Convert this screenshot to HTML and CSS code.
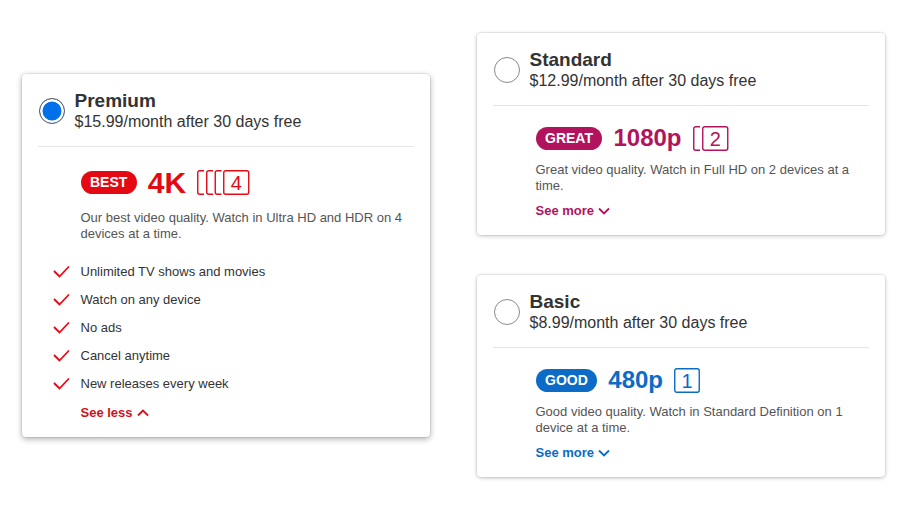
FILE: index.html
```html
<!DOCTYPE html>
<html lang="en">
<head>
<meta charset="utf-8">
<title>Plans</title>
<link rel="stylesheet" href="styles.css">
</head>
<body>
<main class="plans">
  <section class="card card--selected card--best">
    <header class="card-head">
      <span class="radio radio--on"></span>
      <div class="plan-info">
        <div class="plan-name">Premium</div>
        <div class="plan-price">$15.99/month after 30 days free</div>
      </div>
    </header>
    <div class="card-body">
      <div class="quality">
        <span class="badge">BEST</span>
        <span class="res res--big">4K</span>
        <svg class="screens" width="53" height="25" viewBox="0 0 53 25">
          <path d="M7 0.75 H2.75 A2 2 0 0 0 0.75 2.75 V22.25 A2 2 0 0 0 2.75 24.25 H7"/>
          <path d="M16 0.75 H11.75 A2 2 0 0 0 9.75 2.75 V22.25 A2 2 0 0 0 11.75 24.25 H16"/>
          <path d="M24.5 0.75 H20.25 A2 2 0 0 0 18.25 2.75 V22.25 A2 2 0 0 0 20.25 24.25 H24.5"/>
          <rect x="26.75" y="0.75" width="25" height="23.5" rx="2"/>
          <text x="39.25" y="19.5" text-anchor="middle">4</text>
        </svg>
      </div>
      <p class="desc">Our best video quality. Watch in Ultra HD and HDR on 4 devices at a time.</p>
      <ul class="features">
        <li><svg class="check" width="17" height="13" viewBox="0 0 17 13"><polyline points="1,6 6.5,11.5 16,1.5"/></svg>Unlimited TV shows and movies</li>
        <li><svg class="check" width="17" height="13" viewBox="0 0 17 13"><polyline points="1,6 6.5,11.5 16,1.5"/></svg>Watch on any device</li>
        <li><svg class="check" width="17" height="13" viewBox="0 0 17 13"><polyline points="1,6 6.5,11.5 16,1.5"/></svg>No ads</li>
        <li><svg class="check" width="17" height="13" viewBox="0 0 17 13"><polyline points="1,6 6.5,11.5 16,1.5"/></svg>Cancel anytime</li>
        <li><svg class="check" width="17" height="13" viewBox="0 0 17 13"><polyline points="1,6 6.5,11.5 16,1.5"/></svg>New releases every week</li>
      </ul>
      <a class="toggle" href="#">See less <svg class="chev" width="12" height="8" viewBox="0 0 12 8"><polyline points="1,6.5 6,1.5 11,6.5"/></svg></a>
    </div>
  </section>

  <div class="col">
    <section class="card card--great">
      <header class="card-head">
        <span class="radio"></span>
        <div class="plan-info">
          <div class="plan-name">Standard</div>
          <div class="plan-price">$12.99/month after 30 days free</div>
        </div>
      </header>
      <div class="card-body">
        <div class="quality">
          <span class="badge">GREAT</span>
          <span class="res">1080p</span>
          <svg class="screens" width="36" height="25" viewBox="0 0 36 25">
            <path d="M7 0.75 H2.75 A2 2 0 0 0 0.75 2.75 V22.25 A2 2 0 0 0 2.75 24.25 H7"/>
            <rect x="9.75" y="0.75" width="25" height="23.5" rx="2"/>
            <text x="22.25" y="19.5" text-anchor="middle">2</text>
          </svg>
        </div>
        <p class="desc">Great video quality. Watch in Full HD on 2 devices at a time.</p>
        <a class="toggle" href="#">See more <svg class="chev" width="12" height="8" viewBox="0 0 12 8"><polyline points="1,1.5 6,6.5 11,1.5"/></svg></a>
      </div>
    </section>

    <section class="card card--good">
      <header class="card-head">
        <span class="radio"></span>
        <div class="plan-info">
          <div class="plan-name">Basic</div>
          <div class="plan-price">$8.99/month after 30 days free</div>
        </div>
      </header>
      <div class="card-body">
        <div class="quality">
          <span class="badge">GOOD</span>
          <span class="res">480p</span>
          <svg class="screens" width="26" height="25" viewBox="0 0 26 25">
            <rect x="0.75" y="0.75" width="24.5" height="23.5" rx="2"/>
            <text x="13" y="19.5" text-anchor="middle">1</text>
          </svg>
        </div>
        <p class="desc">Good video quality. Watch in Standard Definition on 1 device at a time.</p>
        <a class="toggle" href="#">See more <svg class="chev" width="12" height="8" viewBox="0 0 12 8"><polyline points="1,1.5 6,6.5 11,1.5"/></svg></a>
      </div>
    </section>
  </div>
</main>
</body>
</html>
```

FILE: styles.css
```css
* { box-sizing: border-box; }

html, body {
  margin: 0;
  padding: 0;
  background: #fff;
}

body {
  font-family: "Liberation Sans", Arial, sans-serif;
  color: #333;
}

.plans {
  min-height: 100vh;
  display: flex;
  align-items: center;
  justify-content: center;
  gap: 47px;
}

.col {
  display: flex;
  flex-direction: column;
  gap: 40px;
}

.card {
  width: 408px;
  background: #fff;
  border-radius: 4px;
  box-shadow: 0 0 0 1px rgba(0,0,0,0.06), 0 1px 4px rgba(0,0,0,0.22);
}

.card--selected {
  box-shadow: 0 0 0 1px rgba(0,0,0,0.06), 0 2px 6px rgba(0,0,0,0.32);
}

.card--best { --accent: #e50914; }
.card--great { --accent: #b1135d; }
.card--good { --accent: #0b6bc6; }

.card-head {
  margin: 0 16px;
  padding: 16px 0 14px 1px;
  border-bottom: 1px solid #e6e6e6;
  display: flex;
  align-items: center;
  gap: 10px;
}

.radio {
  width: 26px;
  height: 26px;
  border-radius: 50%;
  border: 1px solid #8a8a8a;
  flex: none;
  background: #fff;
}

.radio--on {
  border: 1.5px solid #666;
  background: #0071eb;
  box-shadow: inset 0 0 0 2.5px #fff;
}

.plan-name {
  font-size: 19px;
  font-weight: bold;
  line-height: 22px;
  color: #333;
}

.plan-price {
  font-size: 16px;
  line-height: 20px;
  color: #333;
}

.card-body {
  padding: 18px 16px 16px 59px;
}

.quality {
  display: flex;
  align-items: center;
  gap: 11px;
}

.badge {
  background: var(--accent);
  color: #fff;
  font-size: 14px;
  font-weight: bold;
  line-height: 23px;
  height: 23px;
  padding: 0 9.5px;
  border-radius: 12px;
}

.res {
  color: var(--accent);
  font-size: 24px;
  font-weight: bold;
  line-height: 1.2;
}

.res--big {
  font-size: 30px;
}

.screens path,
.screens rect {
  fill: #fff;
  stroke: var(--accent);
  stroke-width: 1.4;
}

.screens path {
  fill: none;
}

.screens text {
  fill: var(--accent);
  font-family: "Liberation Sans", Arial, sans-serif;
  font-size: 20px;
}

.desc {
  margin: 9px 0 0;
  font-size: 13px;
  line-height: 16px;
  color: #555;
}

.features {
  list-style: none;
  margin: 22px 0 0 -28px;
  padding: 0;
  display: flex;
  flex-direction: column;
  gap: 12px;
}

.features li {
  display: flex;
  align-items: center;
  gap: 11px;
  font-size: 13px;
  line-height: 16px;
  color: #333;
}

.check {
  flex: none;
}

.check polyline {
  fill: none;
  stroke: #e50914;
  stroke-width: 1.8;
}

.toggle {
  display: inline-flex;
  align-items: center;
  gap: 4px;
  margin-top: 9px;
  font-size: 13px;
  line-height: 16px;
  font-weight: bold;
  color: var(--accent);
  text-decoration: none;
}

.card--best .toggle {
  margin-top: 13px;
  color: #d0101c;
}

.chev polyline {
  fill: none;
  stroke: currentColor;
  stroke-width: 1.8;
}
```
